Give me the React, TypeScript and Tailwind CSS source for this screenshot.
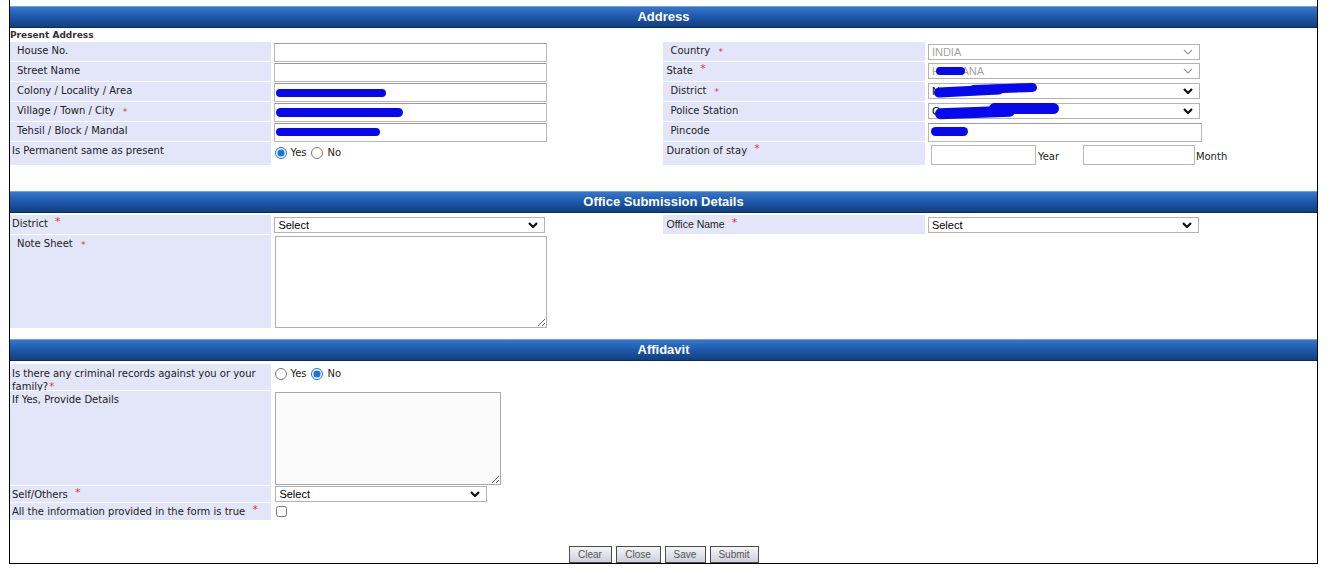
import React from "react";

const verdana = "font-['DejaVu_Sans',Verdana,sans-serif]";
const arial = "font-['Liberation_Sans',Arial,sans-serif]";

function Req({ sup = false, tight = false }: { sup?: boolean; tight?: boolean }) {
  if (tight) {
    return <span className="ml-[1px] text-[10px] leading-[10px] text-[#e2304f]">*</span>;
  }
  if (sup) {
    return (
      <span className="relative -top-[2px] ml-[4px] text-[11px] leading-none text-[#e2304f]">
        *
      </span>
    );
  }
  return (
    <span className="relative top-[1px] ml-[5px] text-[9px] leading-none text-[#e2304f]">
      *
    </span>
  );
}

function SectionHeader({ title, className = "" }: { title: string; className?: string }) {
  return (
    <div
      className={`flex h-[22px] items-center justify-center border-t border-[#6ea2de] border-b border-b-[#0b2d5e] bg-linear-to-b from-[#3577cd] via-[#1e57ab] to-[#113f7e] text-[13px] font-bold text-white ${arial} ${className}`}
    >
      {title}
    </div>
  );
}

function Label({
  children,
  indent = true,
  className = "",
}: {
  children: React.ReactNode;
  indent?: boolean;
  className?: string;
}) {
  return (
    <div
      className={`bg-[#e2e6f8] ${indent ? "pl-[7px]" : "pl-[2px]"} pt-[3px] text-[10px] leading-[12px] text-[#222] ${className}`}
    >
      {children}
    </div>
  );
}

function Blob({ className }: { className: string }) {
  return <span className={`pointer-events-none absolute rounded-full bg-[#0808ee] ${className}`} />;
}

function TextBox({ width = "w-[273px]", blob }: { width?: string; blob?: string }) {
  return (
    <div className={`relative h-[19px] ${width}`}>
      <input
        type="text"
        className={`block h-full w-full border border-[#b8b8b8] border-t-[#9a9a9a] bg-white px-[2px] text-[11px] outline-none ${arial}`}
      />
      {blob && <Blob className={blob} />}
    </div>
  );
}

function Chevron({ disabled }: { disabled?: boolean }) {
  return (
    <svg width="10" height="6" viewBox="0 0 10 6" className="shrink-0">
      <path
        d="M1 1 L5 5 L9 1"
        fill="none"
        stroke={disabled ? "#9a9a9a" : "#111"}
        strokeWidth={disabled ? 1.2 : 2.2}
      />
    </svg>
  );
}

function SelectBox({
  value,
  width = "w-[272px]",
  disabled,
  blob,
  blob2,
}: {
  value: string;
  width?: string;
  disabled?: boolean;
  blob?: string;
  blob2?: string;
}) {
  return (
    <div
      className={`relative flex h-[16px] items-center justify-between border border-[#b3b3b3] bg-white pl-[3px] pr-[6px] ${width}`}
    >
      <span
        className={`text-[11px] leading-none ${arial} ${disabled ? "text-[#a3a3a3]" : "text-black"}`}
      >
        {value}
      </span>
      <Chevron disabled={disabled} />
      {blob && <Blob className={blob} />}
      {blob2 && <Blob className={blob2} />}
    </div>
  );
}

function Radio({ checked, name }: { checked?: boolean; name: string }) {
  return (
    <input
      type="radio"
      name={name}
      defaultChecked={checked}
      className="m-0 h-[12px] w-[12px] accent-[#1a74e0]"
    />
  );
}

function YesNo({ name, yes }: { name: string; yes: boolean }) {
  return (
    <div className="flex items-center gap-[3px] text-[10px] leading-[12px] text-[#222]">
      <Radio name={name} checked={yes} />
      <span className="mr-[1px]">Yes</span>
      <Radio name={name} checked={!yes} />
      <span className="ml-[2px]">No</span>
    </div>
  );
}

function FormButton({ label, width }: { label: string; width: string }) {
  return (
    <button
      className={`h-[17px] ${width} border border-[#4a4a4a] bg-linear-to-b from-[#f5f5f9] to-[#cdcfd9] text-[10px] leading-none text-[#555] ${arial}`}
    >
      {label}
    </button>
  );
}

export default function App() {
  return (
    <div className="min-h-[576px] bg-white">
      <div className={`ml-[9px] w-[1309px] border-x border-b border-black pt-[6px] ${verdana}`}>
        {/* Address */}
        <SectionHeader title="Address" />
        <div className="h-[14px] pt-[2px] text-[9px] font-bold leading-[11px] text-[#333]">
          Present Address
        </div>
        <div className="grid grid-cols-[20%_30%_20%_30%] grid-rows-[repeat(5,19px)_23px] gap-y-px">
          <Label>House No.</Label>
          <div className="pl-[3px] pt-px">
            <TextBox />
          </div>
          <Label>
            Country <Req />
          </Label>
          <div className="pl-[3px] pt-[2px]">
            <SelectBox value="INDIA" disabled />
          </div>

          <Label>Street Name</Label>
          <div className="pl-[3px] pt-px">
            <TextBox />
          </div>
          <Label indent={false} className="pl-[3px]">
            State <Req sup />
          </Label>
          <div className="pl-[3px] pt-[1px]">
            <SelectBox value="HARYANA" disabled blob="left-[7px] top-[3px] h-[8px] w-[29px]" />
          </div>

          <Label>Colony / Locality / Area</Label>
          <div className="pl-[3px] pt-px">
            <TextBox blob="left-[2px] top-[6px] h-[8px] w-[110px]" />
          </div>
          <Label>
            District <Req />
          </Label>
          <div className="pl-[3px] pt-[1px]">
            <SelectBox
              value="N"
              blob="left-[5px] top-[2px] h-[10px] w-[70px] -rotate-3"
              blob2="left-[40px] top-[0px] h-[9px] w-[68px] -rotate-2"
            />
          </div>

          <Label>
            Village / Town / City <Req />
          </Label>
          <div className="pl-[3px] pt-px">
            <TextBox blob="left-[2px] top-[5px] h-[9px] w-[127px]" />
          </div>
          <Label>Police Station</Label>
          <div className="pl-[3px] pt-[1px]">
            <SelectBox
              value="G"
              blob="left-[6px] top-[3px] h-[11px] w-[80px] -rotate-2"
              blob2="left-[60px] top-[-1px] h-[11px] w-[70px]"
            />
          </div>

          <Label>Tehsil / Block / Mandal</Label>
          <div className="pl-[3px] pt-px">
            <TextBox blob="left-[2px] top-[5px] h-[8px] w-[104px]" />
          </div>
          <Label>Pincode</Label>
          <div className="pl-[3px] pt-px">
            <TextBox width="w-[274px]" blob="left-[3px] top-[4px] h-[9px] w-[37px]" />
          </div>

          <Label indent={false}>Is Permanent same as present</Label>
          <div className="pl-[4px] pt-[5px]">
            <YesNo name="permanent" yes />
          </div>
          <Label indent={false} className="pl-[3px]">
            Duration of stay <Req sup />
          </Label>
          <div className="flex items-end pl-[6px] pt-[3px] text-[10px] leading-[12px] text-[#222]">
            <div className="h-[20px] w-[105px] border border-[#b8b8b8] bg-white" />
            <span className="mb-[2px] ml-[2px] w-[45px]">Year</span>
            <div className="h-[20px] w-[112px] border border-[#b8b8b8] bg-white" />
            <span className="mb-[2px] ml-[1px]">Month</span>
          </div>
        </div>

        {/* Office Submission Details */}
        <SectionHeader title="Office Submission Details" className="mt-[26px]" />
        <div className="mt-[2px] grid grid-cols-[20%_30%_20%_30%] grid-rows-[19px_93px] gap-y-px">
          <Label indent={false}>
            District <Req sup />
          </Label>
          <div className="pl-[3px] pt-[2px]">
            <SelectBox value="Select" width="w-[271px]" />
          </div>
          <Label indent={false} className="pl-[3px]">
            <span className={`${arial} text-[10.5px]`}>Office Name</span> <Req sup />
          </Label>
          <div className="pl-[3px] pt-[2px]">
            <SelectBox value="Select" width="w-[271px]" />
          </div>

          <Label>
            Note Sheet <Req />
          </Label>
          <div className="pl-[4px] pt-px">
            <textarea className="block h-[92px] w-[272px] border border-[#b0b0b0] bg-white outline-none" />
          </div>
          <div />
          <div />
        </div>

        {/* Affidavit */}
        <SectionHeader title="Affidavit" className="mt-[11px]" />
        <div className="mt-[3px] grid grid-cols-[20%_80%] grid-rows-[26px_94px_16px_17px] gap-y-px">
          <Label indent={false} className="pr-[6px] leading-[13px]">
            <div>Is there any criminal records against you or your</div>
            <div>
              family?
              <Req tight />
            </div>
          </Label>
          <div className="pl-[4px] pt-[4px]">
            <YesNo name="criminal" yes={false} />
          </div>

          <Label indent={false}>If Yes, Provide Details</Label>
          <div className="pl-[4px] pt-px">
            <textarea
              disabled
              className="block h-[93px] w-[226px] border border-[#a9a9a9] bg-[#fbfbfb] outline-none"
            />
          </div>

          <Label indent={false} className="pt-[1px]">
            Self/Others <Req sup />
          </Label>
          <div className="pl-[4px]">
            <SelectBox value="Select" width="w-[212px]" />
          </div>

          <Label indent={false} className="pt-[1px]">
            All the information provided in the form is true <Req sup />
          </Label>
          <div className="flex pl-[5px] pt-[3px]">
            <input type="checkbox" className="m-0 h-[11px] w-[11px]" />
          </div>
        </div>

        <div className="mt-[26px] flex justify-center gap-[4px]">
          <FormButton label="Clear" width="w-[43px]" />
          <FormButton label="Close" width="w-[45px]" />
          <FormButton label="Save" width="w-[41px]" />
          <FormButton label="Submit" width="w-[49px]" />
        </div>
      </div>
    </div>
  );
}
